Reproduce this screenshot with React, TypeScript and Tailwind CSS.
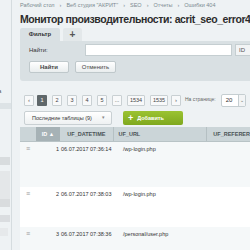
const pages = [
  { p: '1', w: 'w-[10px]' },
  { p: '2', w: 'w-[10px]' },
  { p: '3', w: 'w-[10px]' },
  { p: '4', w: 'w-[10px]' },
  { p: '5', w: 'w-[10px]' },
  { p: '...', w: 'w-[10px]' },
  { p: '1534', w: 'w-[18px]' },
  { p: '1535', w: 'w-[18px]' },
];

const rows = [
  { id: 1, date: '06.07.2017 07:36:14', url: '/wp-login.php', bg: 'bg-[#f5f8f9]', h: 'h-[45px]' },
  { id: 2, date: '06.07.2017 07:38:03', url: '/wp-login.php', bg: 'bg-white', h: 'h-[40px]' },
  { id: 3, date: '06.07.2017 07:38:36', url: '/personal/user.php', bg: 'bg-[#f5f8f9]', h: 'h-[40px]' },
];

const App = () => {
  return (
    <div className="w-[250px] h-[250px] overflow-hidden flex bg-[#eef2f4] font-['Liberation_Sans',Arial,sans-serif] text-[#333]">
      {/* left menu */}
      <div className="w-[12px] shrink-0 border-r border-[#d5dcdf] bg-[#eef2f4] flex flex-col">
        <div className="h-[87px]" />
        <div className="text-[6px] leading-[8px] text-[#555] -ml-[2px]">а</div>
        <div className="h-[8px]" />
        <div className="h-[6px] bg-[#dde3e6]" />
        <div className="h-[48px]" />
        <div className="h-[8px] w-[10px] bg-[#d8dcde]" />
        <div className="h-[6px]" />
        <div className="h-[28px] w-[10px] bg-[#e4e7e9]" />
        <div className="h-[8px] w-[10px] bg-[#d9dcde]" />
        <div className="h-[8px]" />
        <div className="h-[7px] w-[10px] bg-[#dadde0]" />
        <div className="h-[6px]" />
        <div className="h-[8px] w-[8px] bg-[#e6e9eb]" />
      </div>

      {/* main */}
      <div className="flex-1 min-w-0 pl-[8px] whitespace-nowrap">
        <div className="pt-[1px] text-[5.5px] leading-[8px] text-[#7b8a90] flex gap-[5px]">
          <span>Рабочий стол</span><span>›</span>
          <span>Веб студия "АКРИТ"</span><span>›</span>
          <span>SEO</span><span>›</span>
          <span>Отчеты</span><span>›</span>
          <span>Ошибки 404</span>
        </div>
        <h1 className="mt-[2px] text-[10.5px] leading-[16px] tracking-[-0.4px] font-bold text-[#2c2c2c]">
          Монитор производительности: acrit_seo_error404
        </h1>

        {/* filter */}
        <div className="mt-[1px] flex">
          <div className="h-[13px] w-[40px] bg-[#d9e0e3] rounded-t-[2px] flex items-center justify-center text-[6px] font-bold">Фильтр</div>
          <div className="ml-[3px] h-[13px] w-[19px] bg-[#e3e8ea] rounded-t-[2px] flex items-center justify-center text-[10px] font-bold text-[#555]">+</div>
        </div>
        <div className="h-[40px] w-[260px] bg-[#d9e0e3] rounded-bl-[3px] pl-[9px] pt-[3px]">
          <div className="flex items-center h-[12px]">
            <span className="w-[56px] text-[6px] text-[#333]">Найти:</span>
            <div className="w-[147px] h-[12px] bg-white border border-[#c5ced1]" />
            <div className="ml-[3px] h-[12px] w-[20px] bg-[#f2f4f5] border border-[#c5ced1] text-[6px] leading-[10px] pl-[3px] text-[#555]">ID</div>
          </div>
          <div className="flex gap-[6px] mt-[5px]">
            <div className="h-[12px] w-[40px] bg-gradient-to-b from-white to-[#e9edee] border border-[#bfc8cb] rounded-[2px] flex items-center justify-center text-[6px] font-bold text-[#444]">Найти</div>
            <div className="h-[12px] w-[41px] bg-gradient-to-b from-white to-[#e9edee] border border-[#bfc8cb] rounded-[2px] flex items-center justify-center text-[6px] text-[#444]">Отменить</div>
          </div>
        </div>

        {/* pagination */}
        <div className="mt-[13px] ml-[4px] flex items-center h-[12px]">
          <div className="h-[11px] w-[10px] bg-[#f8f9fa] border border-[#c9d0d3] rounded-[1px] text-[6px] leading-[9px] text-center text-[#555]">‹</div>
          {pages.map((pg, i) => (
            <div
              key={pg.p}
              className={
                i === 0
                  ? `ml-[3px] h-[11px] ${pg.w} bg-[#5f676a] text-white rounded-[1px] text-[5.5px] leading-[11px] text-center`
                  : `ml-[5px] h-[11px] ${pg.w} bg-[#f8f9fa] border border-[#c9d0d3] rounded-[1px] text-[5.5px] leading-[9px] text-center text-[#444]`
              }
            >
              {pg.p}
            </div>
          ))}
          <div className="ml-[3px] h-[11px] w-[10px] bg-[#f8f9fa] border border-[#c9d0d3] rounded-[1px] text-[6px] leading-[9px] text-center text-[#555]">›</div>
          <span className="ml-[4px] text-[5px] text-[#666]">На странице:</span>
          <div className="ml-[5px] h-[13px] w-[25px] bg-white border border-[#c5ced1] rounded-[2px] flex items-center justify-between pl-[4px] text-[6px]">
            <span>20</span>
            <span className="h-full w-[7px] border-l border-[#c5ced1] bg-[#f2f4f5] text-[5px] leading-[11px] text-center text-[#666]">⌄</span>
          </div>
        </div>

        {/* toolbar */}
        <div className="mt-[5px] ml-[4px] flex items-center h-[14px]">
          <div className="h-[14px] w-[88px] bg-gradient-to-b from-white to-[#eef1f2] border border-[#c9d0d3] rounded-[2px] flex items-center pl-[7px] text-[5.5px] text-[#333]">
            Последние таблицы (9)
            <span className="ml-[10px] text-[5px] text-[#888]">▾</span>
          </div>
          <div className="ml-[11px] h-[14px] w-[60px] bg-gradient-to-b from-[#9bc331] to-[#7fa81e] rounded-[2px] flex items-center pl-[5px] text-[5.5px] font-bold text-white">
            <span className="text-[9px] mr-[4px] leading-[10px]">+</span>Добавить
          </div>
        </div>

        {/* table */}
        <div className="mt-[2px]">
          <div className="flex h-[15px] bg-[#cbd5d8] text-[5.5px] font-bold text-[#4a5256] border-b border-[#b8c3c6]">
            <div className="w-[17px]" />
            <div className="w-[26px] bg-[#a6b2b6] text-white flex items-center justify-center">ID ▲</div>
            <div className="w-[57px] flex items-center justify-center border-r border-[#b5c0c3]">UF_DATETIME</div>
            <div className="w-[100px] flex items-center pl-[5px] border-r border-[#b5c0c3]">UF_URL</div>
            <div className="flex-1 flex items-center pl-[6px]">UF_REFERER</div>
          </div>
          {rows.map((r) => (
            <div key={r.id} className={`flex ${r.bg} ${r.h} text-[5.5px] leading-[8px] text-[#333] pt-[3px]`}>
              <div className="w-[17px] pl-[6px] text-[#999] text-[7px] leading-[7px]">≡</div>
              <div className="w-[24px] text-right pr-[2px]">{r.id}</div>
              <div className="w-[62px]">{r.date}</div>
              <div className="w-[97px]">{r.url}</div>
              <div className="flex-1" />
            </div>
          ))}
        </div>
      </div>
    </div>
  );
};

export default App;
